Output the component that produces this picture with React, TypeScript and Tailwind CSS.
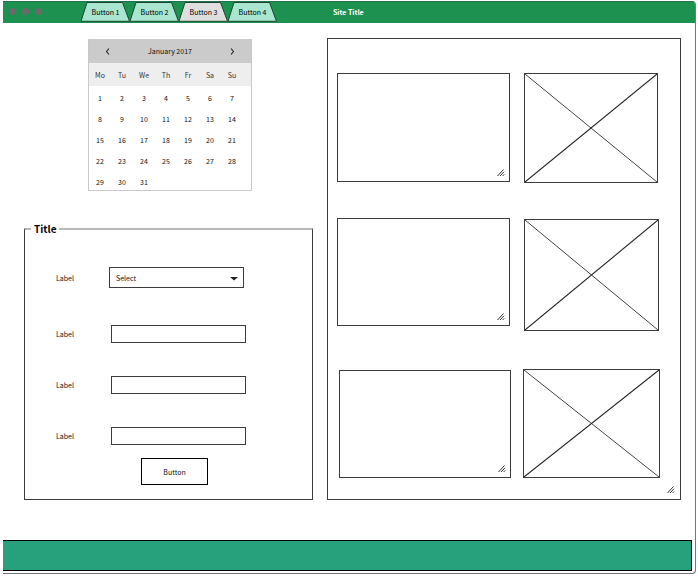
import React from "react";

const tabs = ["Button 1", "Button 2", "Button 3", "Button 4"];
const weekdays = ["Mo", "Tu", "We", "Th", "Fr", "Sa", "Su"];
const weeks = [0, 1, 2, 3, 4].map((week) =>
  weekdays.map((_, day) => week * 7 + day + 1),
);

const galleryRows = [
  { id: "first", row: "grid-cols-[173fr_134fr] gap-[14px] pr-px", note: "h-[109px]", image: "h-[110px]" },
  { id: "second", row: "mt-[35px] grid-cols-[173fr_135fr] gap-[14px]", note: "h-[108px]", image: "mt-px h-[112px]" },
  { id: "third", row: "mt-[38px] -mr-px grid-cols-[172fr_137fr] gap-3 pl-[2px]", note: "mt-px h-[108px]", image: "h-[109px]" },
];

function Tab({ label, active }: { label: string; active: boolean }) {
  return (
    <button type="button" aria-pressed={active} className="relative h-5 w-[49px] text-[7px] leading-5 text-black">
      <svg className="absolute inset-0 h-5 w-full" viewBox="0 0 49 20" aria-hidden="true">
        <path
          d="M0 19.3 L6 0.5 H41.5 L48.5 19.3 Z"
          fill={active ? "#e0dfdf" : "#a8e6cf"}
          stroke="#1f4632"
          strokeWidth="1"
        />
      </svg>
      <span className="relative">{label}</span>
    </button>
  );
}

function Grip() {
  return (
    <svg className="pointer-events-none absolute right-[5px] bottom-[5px] h-2 w-2" viewBox="0 0 8 8" aria-hidden="true">
      <path d="M0.5 7 L6.5 0.5 M3 7 L7 2.8 M5.6 7 L7.2 5.4" fill="none" stroke="#333" strokeWidth="1" />
    </svg>
  );
}

function Chevron({ d }: { d: string }) {
  return (
    <svg className="h-[7px] w-[5px]" viewBox="0 0 5 7" aria-hidden="true">
      <path d={d} fill="none" stroke="#222" strokeWidth="1.1" />
    </svg>
  );
}

function Calendar() {
  return (
    <section aria-label="Calendar" className="ml-16 w-[164px] border border-t-0 border-[#c9c9c9]">
      <div className="flex h-6 items-center justify-between bg-[#cbcbcb] px-4">
        <button type="button" aria-label="Previous month" className="flex h-4 w-[5px] items-center">
          <Chevron d="M4 0.5 L1.5 3.5 L4 6.5" />
        </button>
        <span>January 2017</span>
        <button type="button" aria-label="Next month" className="flex h-4 w-[5px] items-center">
          <Chevron d="M1 0.5 L3.5 3.5 L1 6.5" />
        </button>
      </div>
      <div className="bg-[linear-gradient(#eeeeee_23px,transparent_23px)]">
        <table className="w-[154px] table-fixed border-collapse text-center">
          <thead>
            <tr className="h-[22px]">
              {weekdays.map((day) => (
                <th key={day} scope="col" className="p-0 pt-px font-normal text-[#333]">{day}</th>
              ))}
            </tr>
          </thead>
          <tbody>
            {weeks.map((week) => (
              <tr key={week[0]} className="h-[21px]">
                {week.map((day) => (
                  <td key={day} className="p-0 pt-1">{day <= 31 ? day : ""}</td>
                ))}
              </tr>
            ))}
          </tbody>
        </table>
      </div>
    </section>
  );
}

function TextRow({ id, className }: { id: string; className: string }) {
  return (
    <div className={`flex items-center ${className}`}>
      <label htmlFor={id} className="w-[55px]">Label</label>
      <input id={id} type="text" className="h-[18px] w-[135px] border border-[#3c3c3c] px-1 outline-none" />
    </div>
  );
}

function DetailsForm() {
  return (
    <form onSubmit={(event) => event.preventDefault()}>
      <fieldset className="mt-[30px] border border-t-2 border-[#3c3c3c] border-t-[#b8b8b8] px-[31px] pb-[14px]">
        <legend className="-ml-[25px] px-[3px] text-[10px] leading-4 font-bold text-black">Title</legend>
        <div className="mt-[30px] flex items-center">
          <label htmlFor="choice" className="w-[53px]">Label</label>
          <div className="relative">
            <select id="choice" className="h-[21px] w-[135px] appearance-none border border-[#3c3c3c] bg-white px-[6px] outline-none">
              <option>Select</option>
            </select>
            <svg className="pointer-events-none absolute top-[10px] right-[6px] h-1 w-2" viewBox="0 0 8 4" aria-hidden="true">
              <path d="M0 0 H8 L4 3.5 Z" fill="#222" />
            </svg>
          </div>
        </div>
        <TextRow id="field-1" className="mt-[37px]" />
        <TextRow id="field-2" className="mt-[33px]" />
        <TextRow id="field-3" className="mt-[33px]" />
        <button type="submit" className="mt-[13px] ml-[85px] block h-[27px] w-[67px] border border-black">
          Button
        </button>
      </fieldset>
    </form>
  );
}

function ImagePlaceholder({ className }: { className: string }) {
  return (
    <div role="img" aria-label="Image placeholder" className={`border border-[#3c3c3c] ${className}`}>
      <svg className="block h-full w-full" viewBox="0 0 100 100" preserveAspectRatio="none" aria-hidden="true">
        <path d="M0 0 L100 100" stroke="#444" strokeWidth="1" vectorEffect="non-scaling-stroke" />
        <path d="M0 100 L100 0" stroke="#222" strokeWidth="1.1" vectorEffect="non-scaling-stroke" />
      </svg>
    </div>
  );
}

export default function App() {
  return (
    <div className="bg-white pt-px pr-[2px] pl-[3px] font-['Noto_Sans_CJK_SC','Noto_Sans',sans-serif] text-[7px] leading-3 text-[#111]">
      <div className="overflow-hidden rounded-r-[4px] border-r border-b border-[#777]">
        <header className="flex h-[22px] items-start border-t border-[#24704a] bg-[#1c9150]">
          <div className="mt-[6px] ml-[6px] flex gap-[6px]" aria-hidden="true">
            <span className="h-[7px] w-[7px] rounded-full bg-[#6a6a6a]" />
            <span className="h-[7px] w-[7px] rounded-full bg-[#6a6a6a]" />
            <span className="h-[7px] w-[7px] rounded-full bg-[#6a6a6a]" />
          </div>
          <nav className="ml-[39px] flex" aria-label="Pages">
            {tabs.map((label) => (
              <Tab key={label} label={label} active={label === "Button 3"} />
            ))}
          </nav>
          <h1 className="ml-14 leading-5 font-bold text-white">Site Title</h1>
        </header>

        <main className="grid grid-cols-[289fr_354fr] items-start gap-[14px] pt-[15px] pr-[14px] pl-[21px]">
          <div className="pt-px">
            <Calendar />
            <DetailsForm />
          </div>
          <section aria-label="Gallery" className="relative border border-[#3c3c3c] pt-[34px] pr-[21px] pb-[21px] pl-[9px]">
            {galleryRows.map(({ id, row, note, image }) => (
              <div key={id} className={`grid items-start ${row}`}>
                <div className={`relative ${note}`}>
                  <textarea aria-label={`Notes for the ${id} image`} className="block h-full w-full resize-none border border-[#3c3c3c] p-1 outline-none" />
                  <Grip />
                </div>
                <ImagePlaceholder className={image} />
              </div>
            ))}
            <Grip />
          </section>
        </main>

        <footer className="mt-10 mr-[3px] mb-[2px] h-[31px] border border-l-0 border-black bg-[#27a07c]" />
      </div>
    </div>
  );
}
